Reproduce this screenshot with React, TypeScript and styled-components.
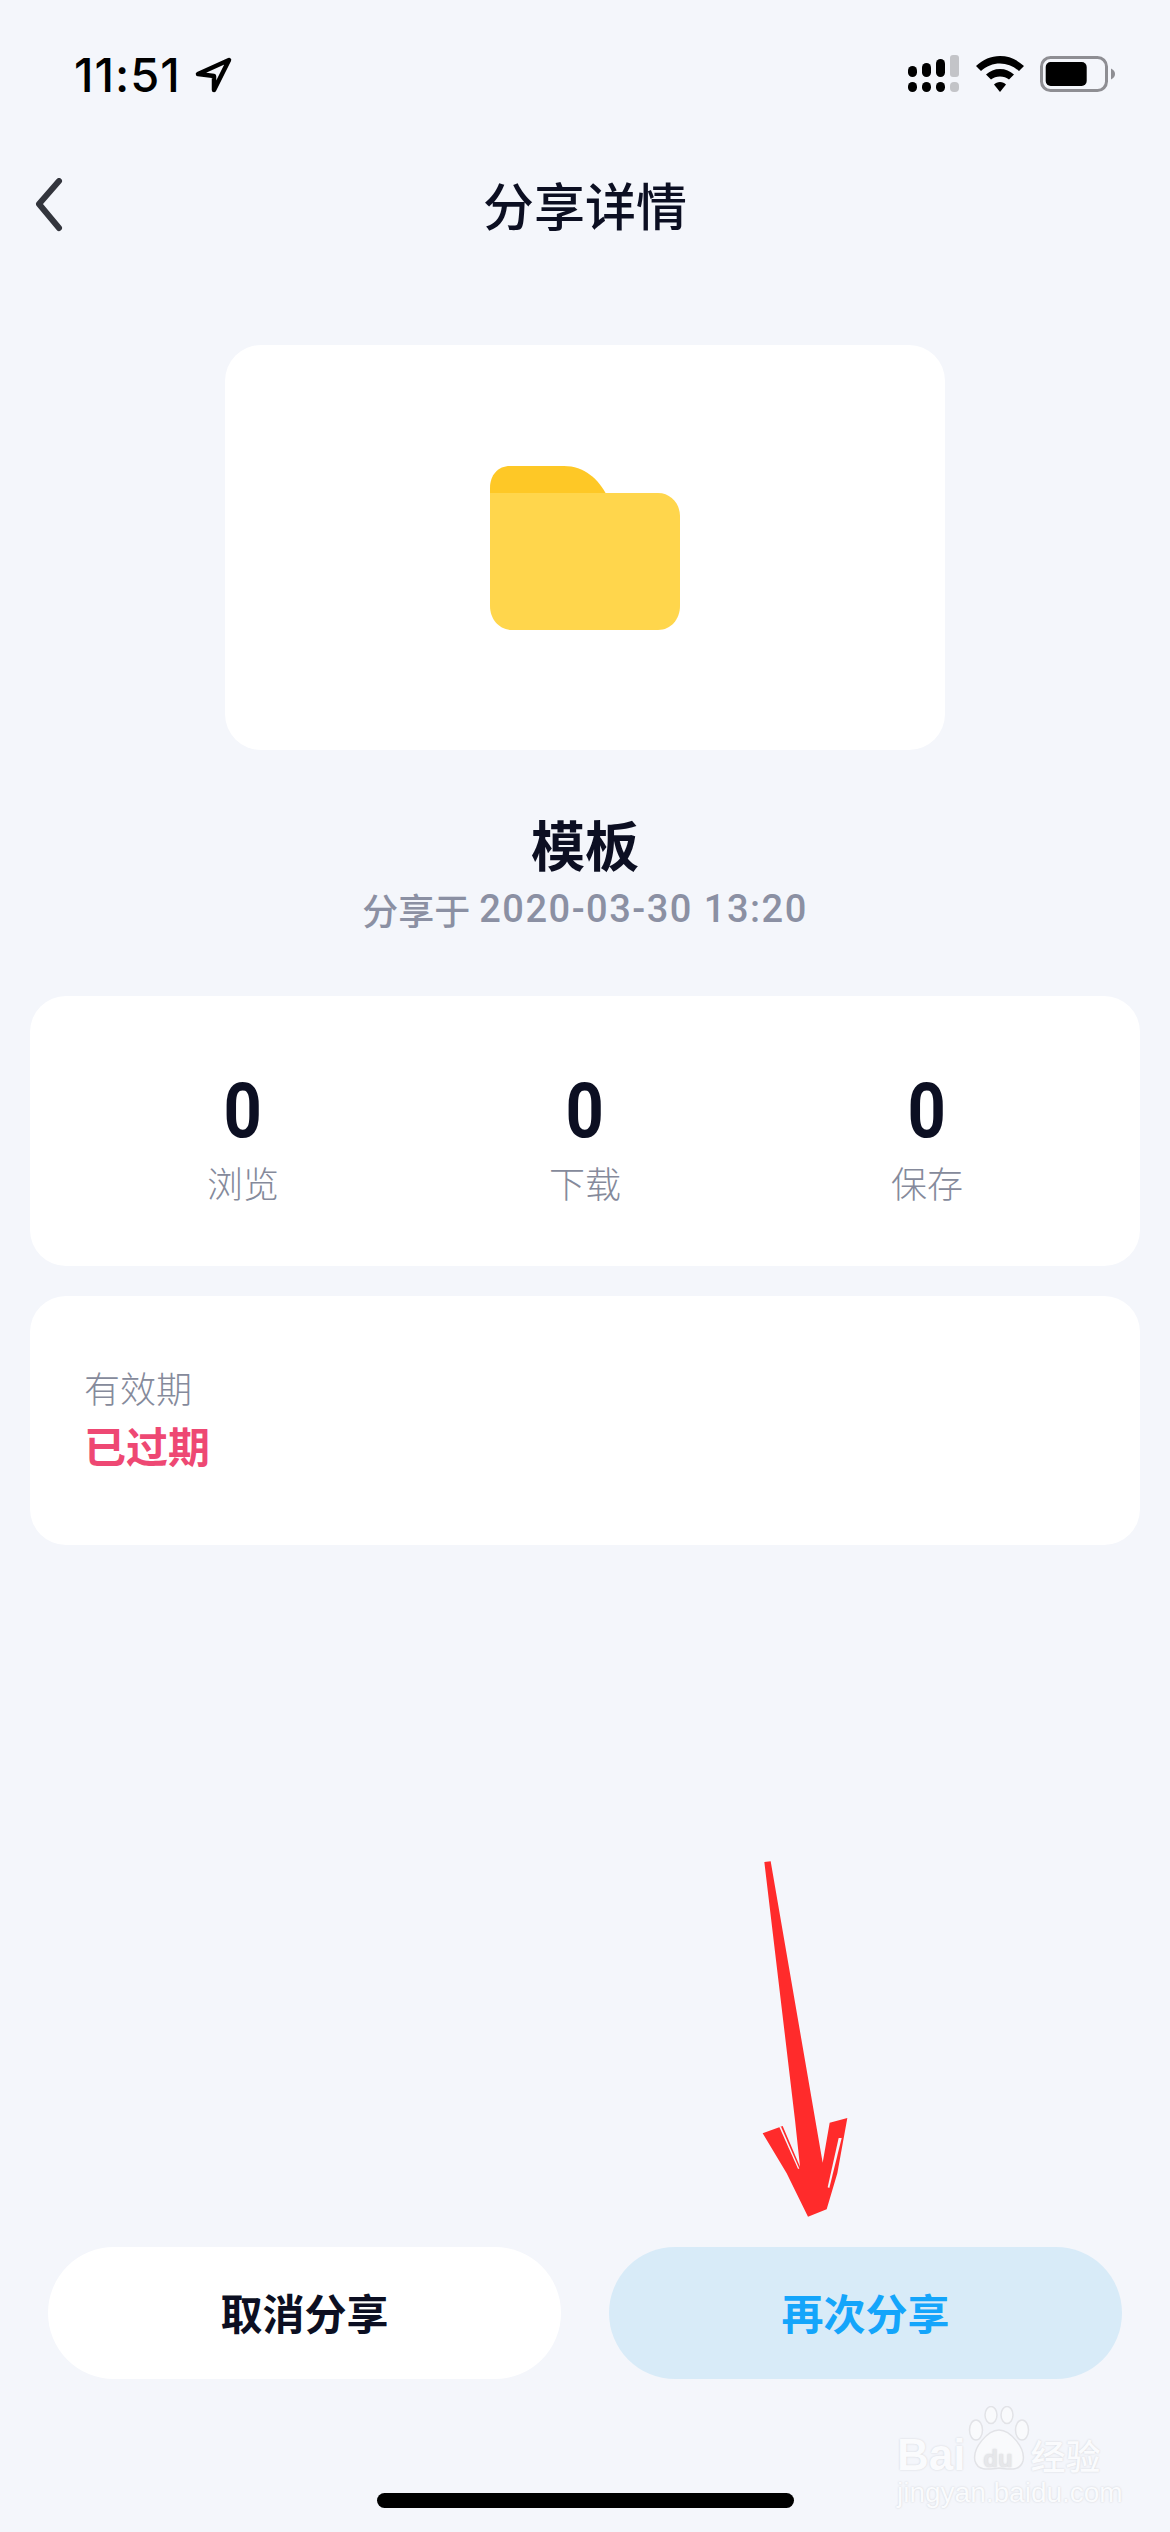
import React from "react";
import styled, { createGlobalStyle } from "styled-components";

const FONT = `"Noto Sans CJK SC", "Noto Sans", sans-serif`;

const GlobalStyle = createGlobalStyle`
  html, body {
    margin: 0;
    padding: 0;
    background: #f4f6fb;
  }
  * {
    box-sizing: border-box;
  }
`;

const stats = [
  { label: "浏览", value: 0 },
  { label: "下载", value: 0 },
  { label: "保存", value: 0 },
];

const App = () => {
  return (
    <Page>
      <GlobalStyle />
      <StatusBar>
        <TimeWrap>
          <Time>11:51</Time>
          <svg width="40" height="40" viewBox="0 0 40 40">
            <path
              d="M35 6 L4 20 L20 22 L20 36 Z"
              fill="none"
              stroke="#000"
              strokeWidth="4.5"
              strokeLinejoin="round"
            />
          </svg>
        </TimeWrap>
        <StatusIcons>
          <svg width="52" height="38" viewBox="0 0 52 38">
            <rect x="0" y="11" width="9" height="11" rx="4.5" fill="#000" />
            <rect x="14" y="8" width="9" height="14" rx="4.5" fill="#000" />
            <rect x="28" y="4" width="9" height="18" rx="4.5" fill="#000" />
            <rect x="42" y="0" width="9" height="22" rx="3" fill="#c3c4c8" />
            <rect x="0" y="27" width="9" height="10" rx="4.5" fill="#000" />
            <rect x="14" y="27" width="9" height="10" rx="4.5" fill="#000" />
            <rect x="28" y="27" width="9" height="10" rx="4.5" fill="#000" />
            <rect x="42" y="27" width="9" height="10" rx="4" fill="#c3c4c8" />
          </svg>
          <svg width="48" height="36" viewBox="0 0 48 36">
            <path d="M24 0 C15 0 7 3.500 0 10 L5 15 C10.500 10 17 7.500 24 7.500 C31 7.500 37.500 10 43 15 L48 10 C41 3.500 33 0 24 0 Z" fill="#000" />
            <path d="M24 13 C18.500 13 14 15 10 18.500 L15 23.500 C17.500 21.500 20.500 20.500 24 20.500 C27.500 20.500 30.500 21.500 33 23.500 L38 18.500 C34 15 29.500 13 24 13 Z" fill="#000" />
            <path d="M24 26 C21.500 26 19.500 27 18 28.500 L24 36 L30 28.500 C28.500 27 26.500 26 24 26 Z" fill="#000" />
          </svg>
          <svg width="75" height="36" viewBox="0 0 75 36">
            <rect x="1.500" y="1.500" width="65" height="33" rx="9" fill="none" stroke="#8e8e93" strokeWidth="3" />
            <rect x="5.700" y="6" width="41" height="24" rx="5" fill="#000" />
            <path d="M71 12.500 C74 14 75 16 75 18 C75 20 74 22 71 23.500 Z" fill="#8e8e93" />
          </svg>
        </StatusIcons>
      </StatusBar>

      <NavBar>
        <BackButton>
          <svg width="30" height="56" viewBox="0 0 30 56">
            <path
              d="M26 3 L6 26 L26 50"
              fill="none"
              stroke="#33353d"
              strokeWidth="6"
              strokeLinecap="round"
              strokeLinejoin="round"
            />
          </svg>
        </BackButton>
        <NavTitle>分享详情</NavTitle>
      </NavBar>

      <PreviewCard>
        <svg width="190" height="164" viewBox="0 0 190 164">
          <path
            d="M0 40 L0 22 C0 9 8 0 20 0 L74 0 C94 0 109 13 117 30 L117 40 Z"
            fill="#fec826"
          />
          <path
            d="M0 27 L168 27 C181 27 190 38 190 50 L190 140 C190 153 181 164 168 164 L22 164 C9 164 0 153 0 140 Z"
            fill="#ffd64c"
          />
        </svg>
      </PreviewCard>

      <FileName>模板</FileName>
      <SharedAt>
        分享于<SharedDate>2020-03-30 13:20</SharedDate>
      </SharedAt>

      <StatsCard>
        {stats.map((stat) => (
          <Stat key={stat.label}>
            <StatValue>{stat.value}</StatValue>
            <StatLabel>{stat.label}</StatLabel>
          </Stat>
        ))}
      </StatsCard>

      <ExpiryCard>
        <ExpiryLabel>有效期</ExpiryLabel>
        <ExpiryValue>已过期</ExpiryValue>
      </ExpiryCard>

      <Spacer />

      <Actions>
        <ActionButton>取消分享</ActionButton>
        <ActionButton primary>再次分享</ActionButton>
      </Actions>

      <HomeBar />

      {/* fleche rouge ajoutee sur la capture */}
      <RedArrow width="240" height="420" viewBox="0 0 720 1260">
        <path
          d="M193 126 L212 124 L368 1028 L389 908 L442 894 L412 1060 L380 1168 L324 1190 L260 1060 L188 940 L248 918 L300 1040 L285 900 Z"
          fill="#ff2b2b"
        />
        <path d="M238 921 L243 920 L298 1046 L294 1046 Z" fill="#f4f6fb" />
        <path d="M416 954 L425 954 L388 1104 L383 1102 Z" fill="#f4f6fb" />
      </RedArrow>

      <Watermark>
        <WatermarkPaw width="62" height="67" viewBox="0 0 62 67">
          <g fill="#f9fafc" stroke="#e2e3e7" strokeWidth="1.500">
            <ellipse cx="8" cy="24" rx="6.500" ry="10" />
            <ellipse cx="23" cy="9" rx="6" ry="8.500" />
            <ellipse cx="39" cy="9" rx="6" ry="8.500" />
            <ellipse cx="54" cy="24" rx="6.500" ry="10" />
            <path d="M31 24 C42 24 58 42 55 55 C52 66 40 63 31 62 C22 63 10 66 7 55 C4 42 20 24 31 24 Z" />
          </g>
        </WatermarkPaw>
        <WatermarkBrand>
          <span>Bai</span>
          <WatermarkDu>du</WatermarkDu>
          <WatermarkCn>经验</WatermarkCn>
        </WatermarkBrand>
        <WatermarkUrl>jingyan.baidu.com</WatermarkUrl>
      </Watermark>
    </Page>
  );
};

export default App;

const Page = styled.div`
  position: relative;
  width: 1170px;
  height: 2532px;
  overflow: hidden;
  display: flex;
  flex-direction: column;
  align-items: center;
  background: #f4f6fb;
  font-family: ${FONT};
`;

const StatusBar = styled.div`
  width: 100%;
  height: 56px;
  margin-top: 46px;
  padding: 0 55px 0 74px;
  display: flex;
  justify-content: space-between;
  align-items: center;
`;

const TimeWrap = styled.div`
  display: flex;
  align-items: center;
  gap: 13px;
`;

const Time = styled.span`
  font-family: "Inter", "Liberation Sans", sans-serif;
  font-size: 47px;
  font-weight: 500;
  letter-spacing: 1px;
  color: #000;
`;

const StatusIcons = styled.div`
  display: flex;
  align-items: center;
  gap: 16px;
`;

const NavBar = styled.div`
  position: relative;
  width: 100%;
  height: 90px;
  margin-top: 57px;
  display: flex;
  justify-content: center;
  align-items: center;
`;

const BackButton = styled.div`
  position: absolute;
  left: 33px;
  top: 19px;
  display: flex;
`;

const NavTitle = styled.div`
  font-size: 51px;
  line-height: 60px;
  font-weight: 500;
  color: #0c0f22;
`;

const PreviewCard = styled.div`
  width: 720px;
  height: 405px;
  margin-top: 96px;
  border-radius: 36px;
  background: #fff;
  display: flex;
  justify-content: center;
  align-items: center;
`;

const FileName = styled.div`
  margin-top: 59px;
  font-size: 54px;
  line-height: 70px;
  font-weight: 700;
  color: #0c0f22;
`;

const SharedAt = styled.div`
  margin-top: 8px;
  font-size: 36px;
  line-height: 44px;
  font-weight: 500;
  color: #8b90a3;
  display: flex;
  align-items: center;
  gap: 9px;
`;

const SharedDate = styled.span`
  font-family: "Roboto", sans-serif;
  font-size: 38px;
  font-weight: 500;
  letter-spacing: 1.5px;
`;

const StatsCard = styled.div`
  width: 1110px;
  height: 270px;
  margin-top: 65px;
  padding: 73px 42px 0;
  border-radius: 36px;
  background: #fff;
  display: grid;
  grid-template-columns: repeat(3, 1fr);
  align-items: start;
`;

const Stat = styled.div`
  display: flex;
  flex-direction: column;
  align-items: center;
`;

const StatValue = styled.div`
  font-family: "Roboto", sans-serif;
  font-size: 76px;
  line-height: 84px;
  font-weight: 700;
  color: #0c0f22;
  transform: scaleX(0.88);
`;

const StatLabel = styled.div`
  margin-top: 4px;
  font-size: 36px;
  line-height: 50px;
  font-weight: 300;
  color: #858a9b;
`;

const ExpiryCard = styled.div`
  width: 1110px;
  height: 249px;
  margin-top: 30px;
  padding: 66px 54px 0;
  border-radius: 36px;
  background: #fff;
  display: flex;
  flex-direction: column;
`;

const ExpiryLabel = styled.div`
  font-size: 36px;
  line-height: 50px;
  font-weight: 300;
  color: #858a9b;
`;

const ExpiryValue = styled.div`
  margin-top: 4px;
  font-size: 42px;
  line-height: 58px;
  font-weight: 700;
  color: #ee4873;
`;

const Spacer = styled.div`
  flex: 1;
`;

const Actions = styled.div`
  width: 100%;
  padding: 0 48px;
  display: flex;
  justify-content: space-between;
`;

const ActionButton = styled.div<{ primary?: boolean }>`
  width: 513px;
  height: 132px;
  padding-bottom: 4px;
  border-radius: 66px;
  background: ${(p) => (p.primary ? "#d8ebf8" : "#fff")};
  color: ${(p) => (p.primary ? "#14a5fb" : "#0c0f22")};
  font-size: 42px;
  font-weight: 700;
  display: flex;
  justify-content: center;
  align-items: center;
`;

const HomeBar = styled.div`
  width: 417px;
  height: 15px;
  margin-top: 114px;
  margin-bottom: 24px;
  border-radius: 8px;
  background: #000;
`;

const RedArrow = styled.svg`
  position: absolute;
  left: 700px;
  top: 1820px;
`;

const Watermark = styled.div`
  position: absolute;
  left: 897px;
  top: 2406px;
  width: 215px;
  height: 100px;
  color: #fafbfd;
`;

const WatermarkPaw = styled.svg`
  position: absolute;
  left: 71px;
  top: 0;
`;

const WatermarkBrand = styled.div`
  position: absolute;
  left: 0;
  top: 27px;
  height: 44px;
  display: flex;
  align-items: center;
  white-space: nowrap;
  font-family: "Liberation Sans", ${FONT};
  font-size: 44px;
  line-height: 44px;
  font-weight: 700;
  text-shadow: 0 0 2px #cfd0d5;
`;

const WatermarkDu = styled.span`
  width: 65px;
  align-self: flex-end;
  text-align: center;
  font-size: 24px;
  line-height: 36px;
  color: #e6e7ea;
`;

const WatermarkCn = styled.span`
  font-family: ${FONT};
  font-size: 35px;
  line-height: 44px;
  font-weight: 500;
`;

const WatermarkUrl = styled.div`
  position: absolute;
  left: 0;
  top: 75px;
  white-space: nowrap;
  font-family: "Liberation Sans", sans-serif;
  font-size: 28px;
  line-height: 24px;
  text-shadow: 0 0 2px #cfd0d5;
`;
